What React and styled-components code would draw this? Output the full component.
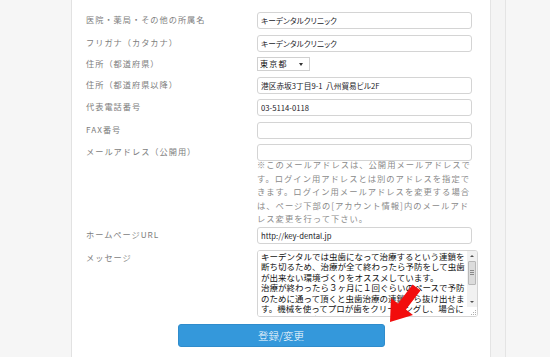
import React from "react";
import styled, { createGlobalStyle } from "styled-components";

const GlobalStyle = createGlobalStyle`
  html, body {
    margin: 0;
    padding: 0;
    background: #fff;
  }
  body {
    font-family: "Noto Sans CJK JP", "Noto Sans", sans-serif;
  }
`;

const fields = [
    { label: "医院・薬局・その他の所属名", value: "キーデンタルクリニック" },
    { label: "フリガナ（カタカナ）", value: "キーデンタルクリニック" },
    { label: "住所（都道府県）", select: "東京都" },
    { label: "住所（都道府県以降）", value: "港区赤坂3丁目9-1  八州貿易ビル2F" },
    { label: "代表電話番号", value: "03-5114-0118" },
    { label: "FAX番号", value: "" },
    {
        label: "メールアドレス（公開用）",
        value: "",
        note: "※このメールアドレスは、公開用メールアドレスです。ログイン用アドレスとは別のアドレスを指定できます。ログイン用メールアドレスを変更する場合は、ページ下部の[アカウント情報]内のメールアドレス変更を行って下さい。",
    },
    { label: "ホームページURL", value: "http://key-dental.jp" },
];

const message =
    "キーデンタルでは虫歯になって治療するという連鎖を断ち切るため、治療が全て終わったら予防をして虫歯が出来ない環境づくりをオススメしています。\n治療が終わったら３ヶ月に１回ぐらいのペースで予防のために通って頂くと虫歯治療の連鎖から抜け出せます。機械を使ってプロが歯をクリーニングし、場合によってはフッ素を塗布します。";

const Page = styled.div`
  position: relative;
  display: flex;
  height: 357px;
  overflow: hidden;
`;

const Sidebar = styled.div`
  width: 71px;
  flex: none;
  background: #f6f6f6;
  border-right: 1px solid #e2e2e2;
`;

const Main = styled.div`
  width: 404px;
  flex: none;
  padding: 12px 0 0 14px;
  background: #fff;
  display: flex;
  flex-direction: column;
  gap: 5.5px;
`;

const Gutter = styled.div`
  width: 14px;
  flex: none;
  background: #f4f4f4;
  border-left: 1px solid #e4e4e4;
  border-right: 1px solid #e4e4e4;
`;

const Aside = styled.div`
  flex: 1;
  background: #f6f6f6;
`;

const Row = styled.div`
  display: flex;
  align-items: flex-start;
`;

const Label = styled.div`
  width: 171px;
  flex: none;
  padding-top: ${(p) => p.$offset ?? 1}px;
  font-size: 8.2px;
  line-height: 12px;
  letter-spacing: 1px;
  color: #7d7d7d;
  white-space: nowrap;
`;

const Field = styled.div`
  display: flex;
  flex-direction: column;
`;

const TextInput = styled.input`
  display: block;
  box-sizing: border-box;
  width: 215px;
  height: 17px;
  margin: 0;
  padding: 0 3px;
  border: 1px solid #d4d4d4;
  border-radius: 3px;
  background: #fff;
  font-family: "Noto Sans CJK JP", sans-serif;
  font-size: 7.7px;
  font-feature-settings: "palt";
  color: #221a28;
  outline: none;
`;

const SelectWrap = styled.div`
  position: relative;
  width: 53px;
  height: 14px;
`;

const Select = styled.select`
  display: block;
  box-sizing: border-box;
  width: 53px;
  height: 14px;
  margin: 0;
  padding: 0 0 0 2px;
  appearance: none;
  border: 1px solid #d0d0d0;
  border-radius: 0;
  background: #fff;
  font-family: "Noto Sans CJK JP", sans-serif;
  font-size: 8px;
  letter-spacing: 1.3px;
  line-height: 12px;
  color: #111;
  outline: none;
`;

const Caret = styled.span`
  position: absolute;
  right: 7px;
  top: 6px;
  width: 0;
  height: 0;
  border-left: 2.5px solid transparent;
  border-right: 2.5px solid transparent;
  border-top: 3px solid #333;
  pointer-events: none;
`;

const Note = styled.p`
  width: 215px;
  margin: -3px 0 -4px;
  font-size: 8.3px;
  line-height: 13.5px;
  letter-spacing: 1px;
  color: #8a8a8a;
`;

const MessageBox = styled.div`
  box-sizing: border-box;
  display: flex;
  width: 221px;
  height: 67px;
  border: 1px solid #d4d4d4;
  border-radius: 3px;
  overflow: hidden;
  background: #fff;
`;

const Message = styled.textarea`
  flex: 1;
  min-width: 0;
  margin: 0;
  padding: 0 0 0 3px;
  border: none;
  resize: none;
  overflow: hidden;
  font-family: "Noto Sans CJK JP", sans-serif;
  font-size: 8.5px;
  line-height: 10.6px;
  color: #111;
  outline: none;
`;

const Scrollbar = styled.div`
  width: 10px;
  flex: none;
  display: flex;
  flex-direction: column;
  background: #f1f1f1;
`;

const ScrollButton = styled.div`
  height: 10px;
  display: flex;
  align-items: center;
  justify-content: center;
  &::after {
    content: "";
    border-left: 2px solid transparent;
    border-right: 2px solid transparent;
    ${(p) => (p.$down ? "border-top: 2.5px solid #505050;" : "border-bottom: 2.5px solid #505050;")}
  }
`;

const Thumb = styled.div`
  height: 22px;
  margin: 0 1px;
  border: 1px solid #b8b8b8;
  border-radius: 1px;
  background: #dcdcdc;
  display: flex;
  flex-direction: column;
  justify-content: center;
  align-items: center;
  gap: 1px;
`;

const GripLine = styled.span`
  width: 4px;
  height: 1px;
  background: #8a8a8a;
`;

const Track = styled.div`
  flex: 1;
`;

const Corner = styled.div`
  height: 9px;
  display: flex;
  align-items: flex-end;
  justify-content: flex-end;
  background: #fff;
`;

const Actions = styled.div`
  display: flex;
  justify-content: center;
  padding: 1.5px 14px 0 0;
`;

const SubmitButton = styled.button`
  width: 207px;
  height: 23px;
  border: 1px solid #2f8ccc;
  border-radius: 3px;
  background: #3498db;
  color: #fff;
  font-family: "Noto Sans CJK JP", sans-serif;
  font-size: 10.5px;
  font-weight: 300;
  cursor: pointer;
`;

const Arrow = styled.svg`
  position: absolute;
  left: 380px;
  top: 275px;
  pointer-events: none;
`;

function FormRow({ item }) {
    return (
        <Row>
            <Label $offset={item.select ? 0 : 1}>{item.label}</Label>
            <Field>
                {item.select ? (
                    <SelectWrap>
                        <Select defaultValue={item.select}>
                            <option>{item.select}</option>
                        </Select>
                        <Caret />
                    </SelectWrap>
                ) : (
                    <TextInput defaultValue={item.value} />
                )}
                {item.note && <Note>{item.note}</Note>}
            </Field>
        </Row>
    );
}

export default function App() {
    return (
        <Page>
            <GlobalStyle />
            <Sidebar />
            <Main>
                {fields.map((item) => (
                    <FormRow item={item} key={item.label} />
                ))}
                <Row>
                    <Label>メッセージ</Label>
                    <MessageBox>
                        <Message defaultValue={message} />
                        <Scrollbar>
                            <ScrollButton />
                            <Thumb>
                                <GripLine />
                                <GripLine />
                                <GripLine />
                            </Thumb>
                            <Track />
                            <ScrollButton $down />
                            <Corner>
                                <svg width="7" height="7" viewBox="0 0 7 7">
                                    <rect x="5" y="1" width="1" height="1" fill="#b0b0b0" />
                                    <rect x="3" y="3" width="1" height="1" fill="#b0b0b0" />
                                    <rect x="5" y="3" width="1" height="1" fill="#b0b0b0" />
                                    <rect x="1" y="5" width="1" height="1" fill="#b0b0b0" />
                                    <rect x="3" y="5" width="1" height="1" fill="#b0b0b0" />
                                    <rect x="5" y="5" width="1" height="1" fill="#b0b0b0" />
                                </svg>
                            </Corner>
                        </Scrollbar>
                    </MessageBox>
                </Row>
                <Actions>
                    <SubmitButton>登録/変更</SubmitButton>
                </Actions>
            </Main>
            <Gutter />
            <Aside />
            <Arrow width="45" height="55" viewBox="0 0 45 55">
                <polygon
                    points="10,47 33,40 25.95,34.55 40.55,15.55 32.65,9.45 18.05,28.45 11,23"
                    fill="#f20d0d"
                />
            </Arrow>
        </Page>
    );
}
